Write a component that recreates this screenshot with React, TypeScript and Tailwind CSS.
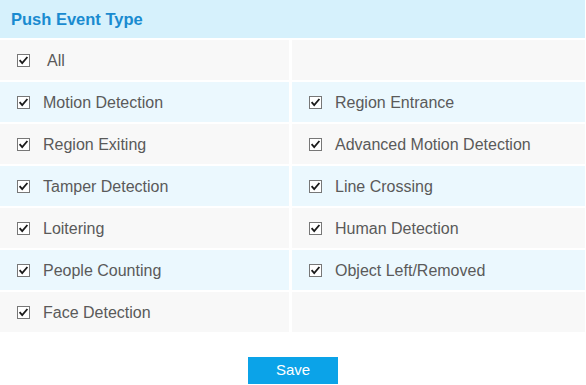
const rows: [string, string | null][] = [
  ["All", null],
  ["Motion Detection", "Region Entrance"],
  ["Region Exiting", "Advanced Motion Detection"],
  ["Tamper Detection", "Line Crossing"],
  ["Loitering", "Human Detection"],
  ["People Counting", "Object Left/Removed"],
  ["Face Detection", null],
];

function Check() {
  return (
    <svg width="13" height="13" viewBox="0 0 13 13" className="shrink-0">
      <rect x="0.5" y="0.5" width="12" height="12" fill="#fff" stroke="#777" />
      <path d="M2.6 6.2 L5.2 9.2 L10.4 3" fill="none" stroke="#1a1a1a" strokeWidth="1.8" />
    </svg>
  );
}

function Cell({ label, bg, all }: { label: string | null; bg: string; all?: boolean }) {
  return (
    <div className={`flex h-10 items-center ${bg}`}>
      {label && (
        <>
          <span className="ml-[17px]">
            <Check />
          </span>
          <span className={`${all ? "ml-[17px]" : "ml-[13px]"} mt-[2px] text-[16px] text-[#5a5a5a]`}>{label}</span>
        </>
      )}
    </div>
  );
}

export default function App() {
  return (
    <div className="w-[586px] h-[385px] bg-white font-['Liberation_Sans',Arial,sans-serif]">
      <div className="w-[585px]">
        <div className="flex h-[38px] items-center bg-[#d6f1fc] pl-[11px] text-[16.5px] font-bold text-[#1a8bd0]">
          Push Event Type
        </div>
        <div className="mt-[2px] flex flex-col gap-[2px]">
          {rows.map(([l, r], i) => {
            const bg = i % 2 === 0 ? "bg-[#f8f8f8]" : "bg-[#ebf8fe]";
            return (
              <div key={i} className="grid grid-cols-[289px_1fr] gap-[3px]">
                <Cell label={l} bg={bg} all={i === 0} />
                <Cell label={r} bg={bg} />
              </div>
            );
          })}
        </div>
        <div className="mt-[25px] flex justify-center pl-[1px]">
          <button className="h-[27px] w-[90px] bg-[#0ba3e8] text-[15px] text-white">Save</button>
        </div>
      </div>
    </div>
  );
}
